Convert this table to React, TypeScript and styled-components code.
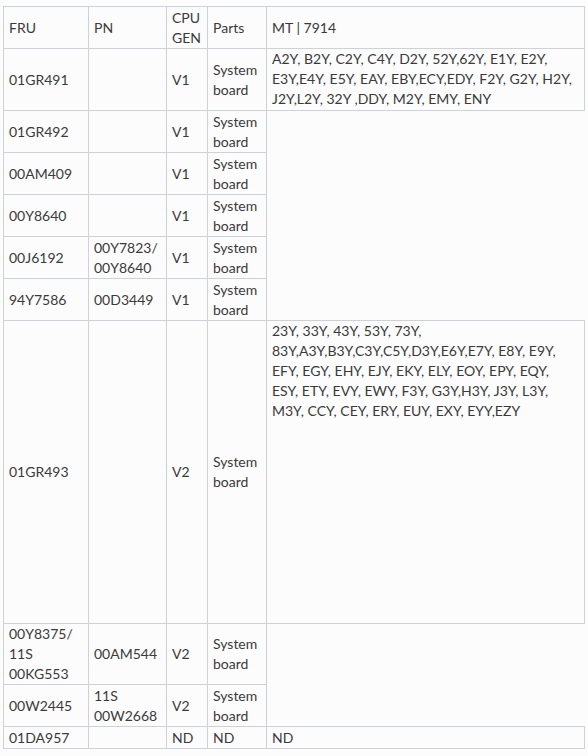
import React from 'react';
import styled, { createGlobalStyle } from 'styled-components';

const GlobalStyle = createGlobalStyle`
  html, body {
    margin: 0;
    padding: 0;
    background: #fcfcfc;
  }
  body {
    font-family: Lato, "Open Sans", "Liberation Sans", sans-serif;
    color: #3a3a3a;
  }
`;

const Page = styled.div`
  padding: 6px 4px 0 3px;
`;

const Table = styled.table`
  width: 581px;
  border-collapse: collapse;
  table-layout: fixed;
  font-size: 14px;
  line-height: 20px;
`;

const Col = styled.col<{ $w: number }>`
  width: ${(p) => p.$w}px;
`;

const Row = styled.tr<{ $h?: number }>`
  height: ${(p) => (p.$h ? `${p.$h}px` : 'auto')};
`;

const Cell = styled.td<{ $top?: boolean }>`
  border: 1px solid #ccd3d6;
  padding: 0 5px;
  vertical-align: ${(p) => (p.$top ? 'top' : 'middle')};
  text-align: left;
  font-weight: 400;
  white-space: nowrap;
`;

const Head = styled(Cell).attrs({ as: 'th' })``;

type Part = {
  fru: React.ReactNode;
  pn?: React.ReactNode;
  gen: string;
  parts: React.ReactNode;
};

const SB = (
  <>
    System
    <br />
    board
  </>
);

const v1Rest: Part[] = [
  { fru: '01GR492', gen: 'V1', parts: SB },
  { fru: '00AM409', gen: 'V1', parts: SB },
  { fru: '00Y8640', gen: 'V1', parts: SB },
  {
    fru: '00J6192',
    pn: (
      <>
        00Y7823/
        <br />
        00Y8640
      </>
    ),
    gen: 'V1',
    parts: SB,
  },
  { fru: '94Y7586', pn: '00D3449', gen: 'V1', parts: SB },
];

const v2Rest: Part[] = [
  {
    fru: (
      <>
        00Y8375/
        <br />
        11S
        <br />
        00KG553
      </>
    ),
    pn: '00AM544',
    gen: 'V2',
    parts: SB,
  },
  {
    fru: '00W2445',
    pn: (
      <>
        11S
        <br />
        00W2668
      </>
    ),
    gen: 'V2',
    parts: SB,
  },
];

const lines = (items: string[]) =>
  items.map((l, i) => (
    <React.Fragment key={i}>
      {l}
      {i < items.length - 1 && <br />}
    </React.Fragment>
  ));

const mtV1 = [
  'A2Y, B2Y, C2Y, C4Y, D2Y, 52Y,62Y, E1Y, E2Y,',
  'E3Y,E4Y, E5Y, EAY, EBY,ECY,EDY, F2Y, G2Y, H2Y,',
  'J2Y,L2Y, 32Y ,DDY, M2Y, EMY, ENY',
];

const mtV2 = [
  '23Y, 33Y, 43Y, 53Y, 73Y,',
  '83Y,A3Y,B3Y,C3Y,C5Y,D3Y,E6Y,E7Y, E8Y, E9Y,',
  'EFY, EGY, EHY, EJY, EKY, ELY, EOY, EPY, EQY,',
  'ESY, ETY, EVY, EWY, F3Y, G3Y,H3Y, J3Y, L3Y,',
  'M3Y, CCY, CEY, ERY, EUY, EXY, EYY,EZY',
];

function PartCells({ p }: { p: Part }) {
  return (
    <>
      <Cell>{p.fru}</Cell>
      <Cell>{p.pn}</Cell>
      <Cell>{p.gen}</Cell>
      <Cell>{p.parts}</Cell>
    </>
  );
}

export default function App() {
  return (
    <>
      <GlobalStyle />
      <Page>
        <Table>
          <colgroup>
            <Col $w={85} />
            <Col $w={78} />
            <Col $w={41} />
            <Col $w={59} />
            <Col $w={318} />
          </colgroup>
          <thead>
            <Row $h={42}>
              <Head>FRU</Head>
              <Head>PN</Head>
              <Head>
                CPU
                <br />
                GEN
              </Head>
              <Head>Parts</Head>
              <Head>MT | 7914</Head>
            </Row>
          </thead>
          <tbody>
            <Row $h={62}>
              <PartCells p={{ fru: '01GR491', gen: 'V1', parts: SB }} />
              <Cell $top>{lines(mtV1)}</Cell>
            </Row>
            {v1Rest.map((p, i) => (
              <Row key={`v1-${i}`} $h={42}>
                <PartCells p={p} />
              </Row>
            ))}
            <Row $h={303}>
              <PartCells p={{ fru: '01GR493', gen: 'V2', parts: SB }} />
              <Cell $top>{lines(mtV2)}</Cell>
            </Row>
            {v2Rest.map((p, i) => (
              <Row key={`v2-${i}`} $h={i === 0 ? 61 : 42}>
                <PartCells p={p} />
              </Row>
            ))}
            <Row $h={22}>
              <PartCells p={{ fru: '01DA957', gen: 'ND', parts: 'ND' }} />
              <Cell>ND</Cell>
            </Row>
          </tbody>
        </Table>
      </Page>
    </>
  );
}
